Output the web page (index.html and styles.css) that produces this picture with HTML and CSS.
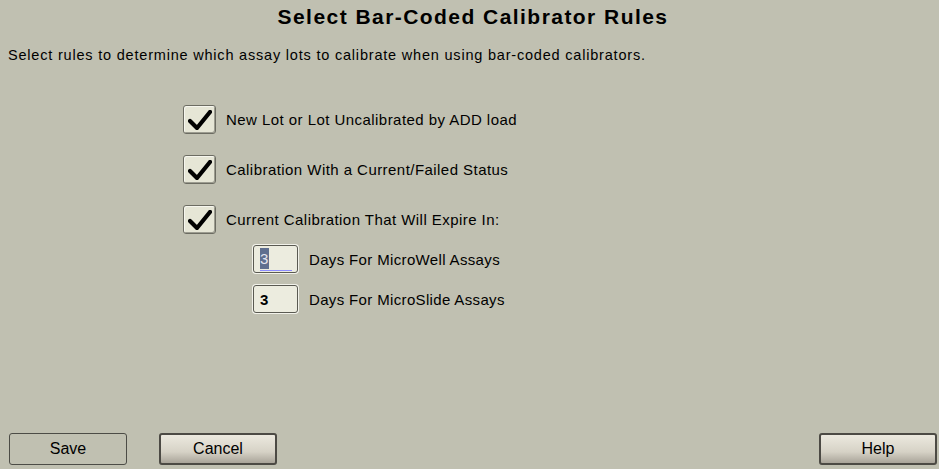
FILE: index.html
```html
<!DOCTYPE html>
<html lang="en">
<head>
  <meta charset="UTF-8" />
  <title>Select Bar-Coded Calibrator Rules</title>
  <link rel="stylesheet" href="styles.css">
</head>
<body>
  <div class="screen">
    <h1 class="title">Select Bar-Coded Calibrator Rules</h1>
    <p class="intro">Select rules to determine which assay lots to calibrate when using bar-coded calibrators.</p>

    <div class="rules">
      <div class="rule">
        <span class="check"><svg viewBox="0 0 24 20" width="24" height="20"><path d="M2 11 L9 18 L22 2" fill="none" stroke="#000" stroke-width="4.2" stroke-linecap="round" stroke-linejoin="round"/></svg></span>
        <span class="label">New Lot or Lot Uncalibrated by ADD load</span>
      </div>
      <div class="rule">
        <span class="check"><svg viewBox="0 0 24 20" width="24" height="20"><path d="M2 11 L9 18 L22 2" fill="none" stroke="#000" stroke-width="4.2" stroke-linecap="round" stroke-linejoin="round"/></svg></span>
        <span class="label">Calibration With a Current/Failed Status</span>
      </div>
      <div class="rule">
        <span class="check"><svg viewBox="0 0 24 20" width="24" height="20"><path d="M2 11 L9 18 L22 2" fill="none" stroke="#000" stroke-width="4.2" stroke-linecap="round" stroke-linejoin="round"/></svg></span>
        <span class="label">Current Calibration That Will Expire In:</span>
      </div>

      <div class="days">
        <div class="day">
          <span class="field focused"><span class="sel">3</span></span>
          <span class="label">Days For MicroWell Assays</span>
        </div>
        <div class="day">
          <span class="field"><b>3</b></span>
          <span class="label">Days For MicroSlide Assays</span>
        </div>
      </div>
    </div>

    <div class="footer">
      <button class="btn flat">Save</button>
      <button class="btn">Cancel</button>
      <button class="btn help">Help</button>
    </div>
  </div>
</body>
</html>
```

FILE: styles.css
```css
html, body {
  margin: 0;
  padding: 0;
  height: 100%;
}
body {
  background-color: #c0c0b1;
  font-family: "Liberation Sans", Arial, sans-serif;
  color: #000;
}
.screen {
  height: 100%;
  display: flex;
  flex-direction: column;
  box-sizing: border-box;
  padding: 0 2px 4px 9px;
}
.title {
  margin: 5px 0 0;
  font-size: 21px;
  font-weight: bold;
  text-align: center;
  line-height: 24px;
  letter-spacing: 1.45px;
}
.intro {
  margin: 17px 0 0 -1px;
  font-size: 14.5px;
  line-height: 18px;
  letter-spacing: 0.8px;
}
.rules {
  margin: 41px 0 0 174px;
  display: flex;
  flex-direction: column;
}
.rule {
  display: flex;
  align-items: center;
  height: 29px;
  margin-bottom: 21px;
}
.check {
  width: 31px;
  height: 27px;
  border: 1px solid #6c6c62;
  border-radius: 3px;
  background: #e6e6d6;
  box-shadow: inset 1px 1px 0 #f6f6ee, inset -1px -1px 0 #9c9c90;
  display: flex;
  align-items: center;
  justify-content: center;
  margin-right: 10px;
}
.label {
  font-size: 15px;
  letter-spacing: 0.45px;
}
.days .label {
  letter-spacing: 0.35px;
}
.days {
  margin: -11px 0 0 69px;
}
.day {
  display: flex;
  align-items: center;
  height: 30px;
  margin-bottom: 10px;
}
.field {
  width: 37px;
  height: 26px;
  border: 1px solid #5a5a52;
  border-radius: 3px;
  box-shadow: 0 0 0 1px #f2f2ea;
  background: #ececdf;
  margin: 0 11px 0 1px;
  display: flex;
  align-items: center;
  padding-left: 6px;
  box-sizing: content-box;
  font-size: 15px;
}
.field b {
  font-weight: bold;
}
.field.focused {
  position: relative;
}
.field.focused::after {
  content: "";
  position: absolute;
  left: 6px;
  right: 5px;
  bottom: 1px;
  height: 1px;
  background: #8c8cff;
}
.sel {
  background: #5f6f8f;
  color: #e4e4ee;
  height: 21px;
  line-height: 21px;
  margin-top: -1px;
  width: 9px;
}
.footer {
  margin-top: auto;
  display: flex;
}
.btn {
  width: 118px;
  height: 32px;
  font-family: "Liberation Sans", Arial, sans-serif;
  font-size: 16px;
  color: #000;
  border: 2px solid #4c4a44;
  border-radius: 3px;
  background: linear-gradient(#ece9df, #d6d2c6 60%, #a9a499);
  margin-right: 32px;
  padding: 0;
}
.btn.flat {
  border: 1px solid #4c4c46;
  background: #c0c0b1;
}
.btn.help {
  margin-left: auto;
  margin-right: 0;
}
```
